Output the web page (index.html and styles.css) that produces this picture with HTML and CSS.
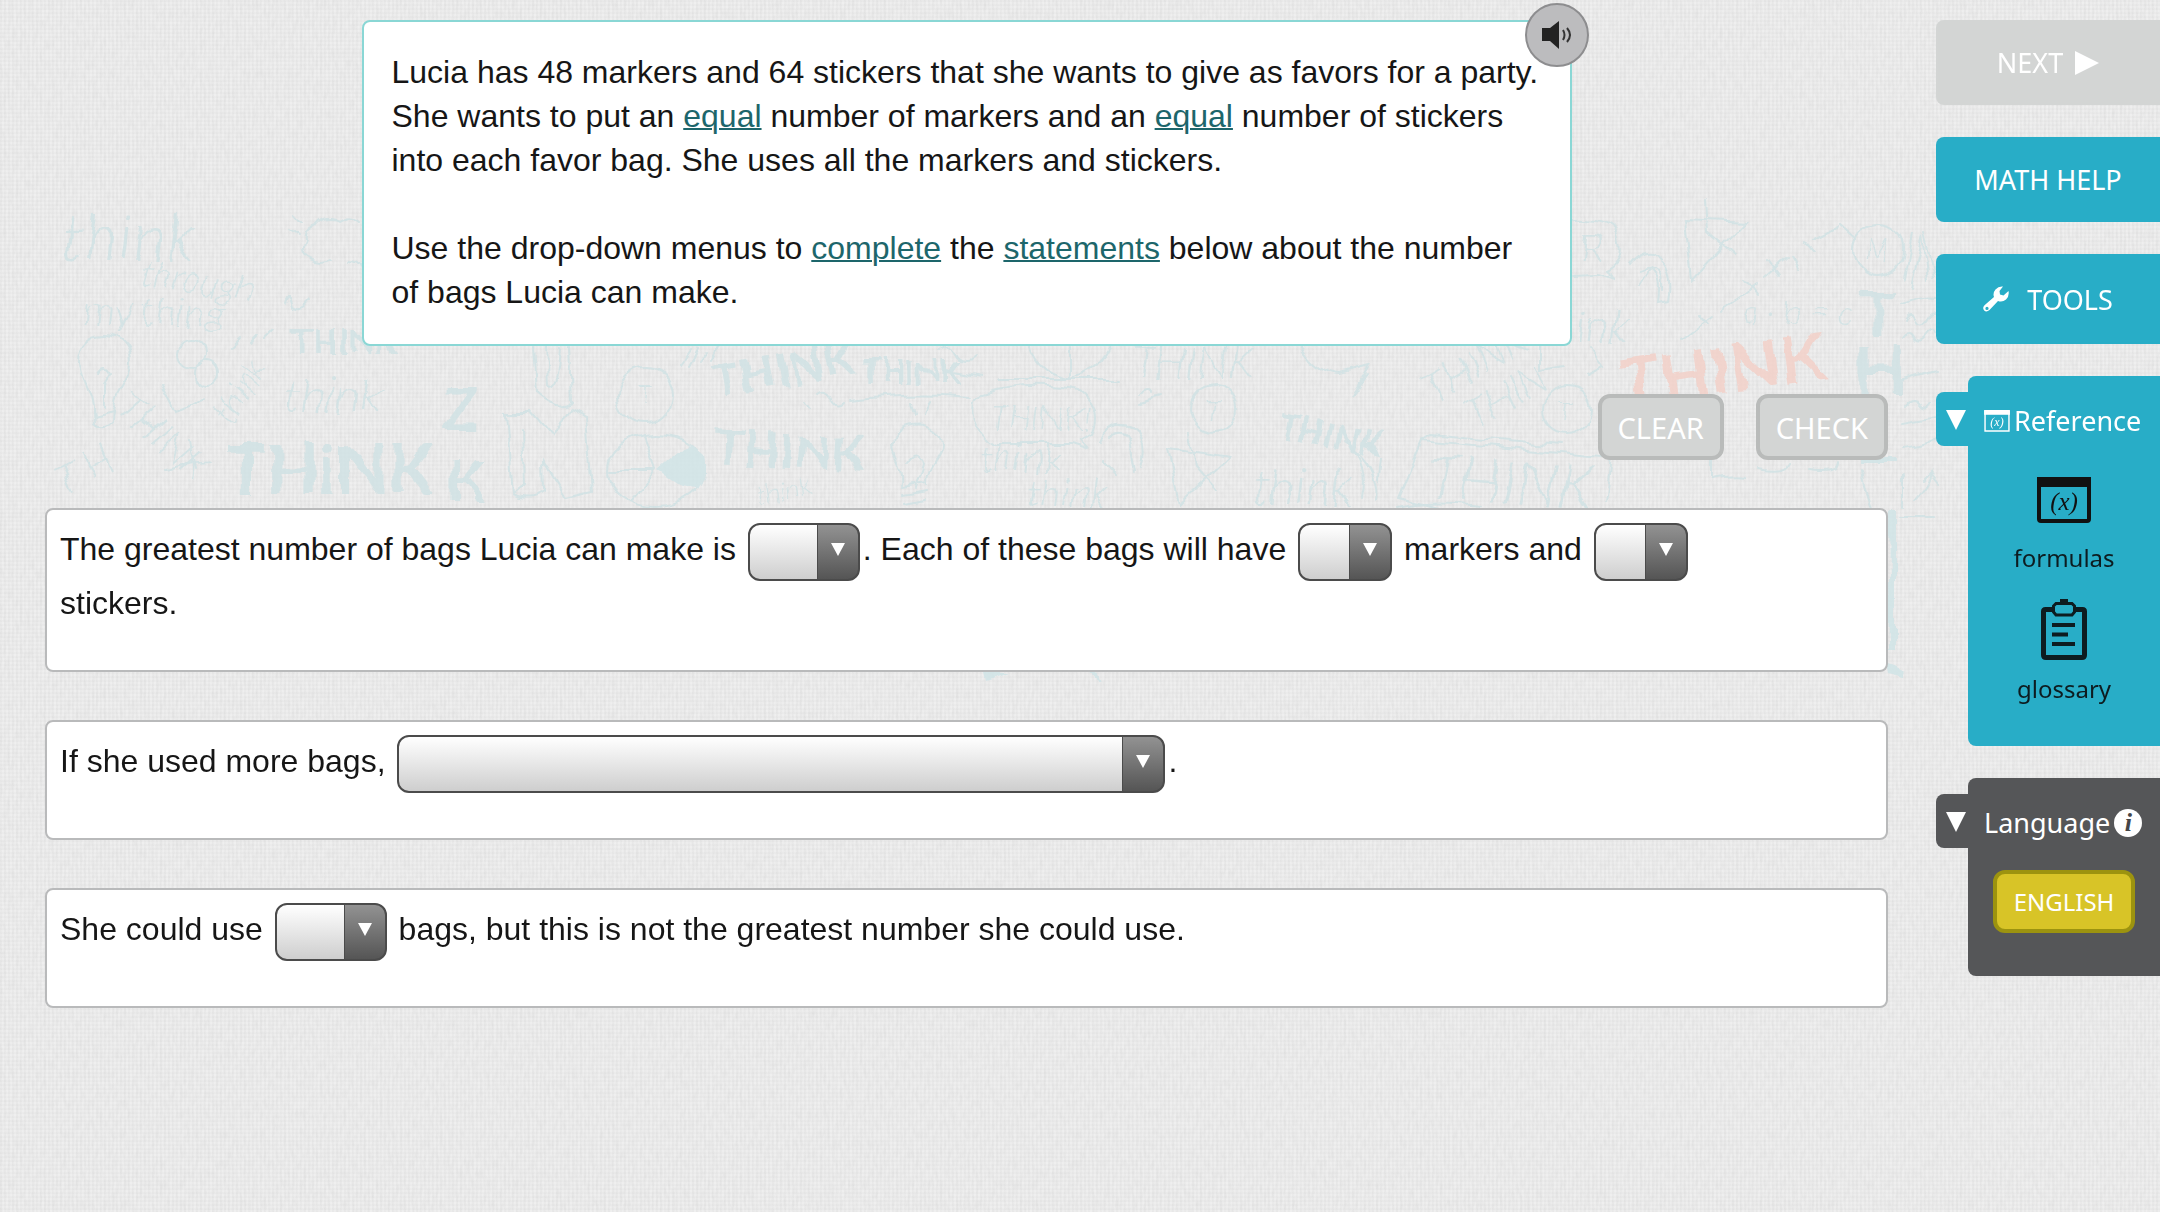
FILE: index.html
```html
<!DOCTYPE html>
<html lang="en">

<head>
    <meta charset="UTF-8">
    <meta name="viewport" content="width=device-width, initial-scale=1.0">
    <title>Math Activity</title>
    <link rel="stylesheet" href="styles.css">
</head>

<body>
    <!-- Doodle background -->
    <svg class="backdrop" viewBox="0 0 2160 1212" preserveAspectRatio="xMidYMin slice" aria-hidden="true">
        <defs>
            <filter id="linen" x="0" y="0" width="100%" height="100%">
                <feTurbulence type="fractalNoise" baseFrequency="0.3 0.1" numOctaves="3" seed="4" />
                <feColorMatrix values="0 0 0 0 0.45  0 0 0 0 0.45  0 0 0 0 0.45  0.9 0 0 0 -0.32" />
            </filter>
            <!-- wobbles the doodles so they look sketched -->
            <filter id="sketch" x="0" y="0" width="100%" height="100%">
                <feTurbulence type="fractalNoise" baseFrequency="0.04" numOctaves="2" seed="7" />
                <feDisplacementMap in="SourceGraphic" scale="12" xChannelSelector="R" yChannelSelector="G" />
            </filter>
        </defs>
        <rect width="2160" height="1212" filter="url(#linen)" opacity="0.25" />
        <g class="doodles" filter="url(#sketch)">
            <g class="doodle-text">
                <text class="script" x="62" y="260" font-size="66">think</text>
                <text class="script" x="140" y="284" font-size="36" transform="rotate(9 140 284)">through</text>
                <text class="script" x="84" y="326" font-size="40">my thing</text>
                <text class="bold" x="292" y="354" font-size="34">THINK</text>
                <text class="script" x="232" y="426" font-size="34" transform="rotate(-58 232 426)">think</text>
                <text class="script" x="284" y="412" font-size="48">think</text>
                <text class="bold" x="226" y="494" font-size="68">THiNK</text>
                <text class="script" x="112" y="410" font-size="40" transform="rotate(42 112 410)">THINK</text>
                <text class="script" x="66" y="496" font-size="40" transform="rotate(-30 66 496)">T H</text>
                <text class="bold" x="442" y="430" font-size="60">Z</text>
                <text class="bold" x="446" y="500" font-size="56">K</text>
                <text class="bold" x="716" y="398" font-size="46" transform="rotate(-10 716 398)">THINK</text>
                <text class="bold" x="862" y="384" font-size="32">THINK</text>
                <text class="bold" x="714" y="464" font-size="48" transform="rotate(3 714 464)">THINK</text>
                <text class="script" x="990" y="430" font-size="34">THINK!</text>
                <text class="script" x="980" y="472" font-size="40">think</text>
                <text class="script" x="1026" y="507" font-size="40">think</text>
                <text class="script" x="760" y="506" font-size="26" transform="rotate(-14 760 506)">think</text>
                <text class="script" x="1132" y="378" font-size="44">THINK</text>
                <text class="bold" x="1276" y="436" font-size="34" transform="rotate(12 1276 436)">THINK</text>
                <text class="script" x="1252" y="504" font-size="50">think</text>
                <text class="script" x="1434" y="404" font-size="40" transform="rotate(-30 1434 404)">THINK</text>
                <text class="script" x="1476" y="430" font-size="40" transform="rotate(-30 1476 430)">THIN</text>
                <text class="script" x="1426" y="498" font-size="60" transform="rotate(4 1426 498)">THINK</text>
                <text class="script" x="1576" y="342" font-size="46">ink</text>
                <text class="script" x="1742" y="324" font-size="34">a · b = c</text>
                <text class="script" x="1866" y="260" font-size="28">M</text>
                <text class="script" x="1580" y="262" font-size="42">R</text>
                <text class="script" x="1558" y="420" font-size="26">T</text>
                <text class="script" x="1206" y="420" font-size="28">T</text>
                <text class="script" x="638" y="404" font-size="26">T</text>
                <text class="bold" x="1860" y="334" font-size="58">T</text>
                <text class="bold" x="1854" y="396" font-size="68">H</text>
                <text class="bold pink" x="1624" y="408" font-size="66" transform="rotate(-8 1624 408)">THINK</text>
            </g>
            <g class="doodle-line">
                <!-- light bulbs -->
                <path d="M93 415 C95 392 80 380 80 362 C80 326 131 326 131 362 C131 384 112 392 113 415 M93 408 L94 425 Q103 434 112 424 L113 408 M93 417 L113 412 M98 374 Q104 364 110 374 L104 384 V408" />
                <path d="M902 486 C904 462 893 458 893 444 C893 418 942 418 942 444 C942 460 926 466 927 486 M902 488 L927 484 M903 496 L927 492 M905 504 L925 500 M909 462 Q918 450 924 464 L916 490 M914 416 L911 402 M924 416 L930 402" />
                <!-- clouds and bubbles -->
                <path d="M361 222 Q350 213 338 221 Q324 215 316 226 Q302 230 304 242 Q298 254 310 260 Q322 266 332 260 M348 262 Q356 262 360 270 M290 230 L298 236 M296 214 L303 222" />
                <path d="M980 394 Q1030 380 1080 390 Q1104 410 1092 432 L1080 440 L1090 450 L1072 444 H996 Q966 424 974 400 Z M970 398 Q920 392 850 400" />
                <path d="M1572 219 Q1618 216 1620 242 Q1624 264 1606 272 L1616 280 L1598 275 L1572 276" />
                <path d="M1627 266 Q1636 252 1654 254 Q1674 268 1668 300 L1658 302 Q1662 276 1650 268 L1640 284 M1640 270 Q1664 260 1662 290" />
                <path d="M1100 440 Q1110 418 1132 428 Q1148 440 1140 470 M1110 436 Q1126 426 1130 446 L1134 474 M1104 460 L1116 472" />
                <!-- circles -->
                <circle cx="645" cy="395" r="28" />
                <circle cx="1567" cy="410" r="24" />
                <circle cx="1214" cy="409" r="24" />
                <circle cx="1878" cy="250" r="25" />
                <circle cx="192" cy="354" r="14" />
                <circle cx="206" cy="374" r="12" />
                <ellipse cx="656" cy="470" rx="48" ry="36" />
                <path d="M656 470 L610 470 M656 470 L644 435 M656 470 L630 500 M1030 346 Q1040 374 1070 378 Q1096 372 1110 346 M1070 346 V378 M1000 379 H1120" />
                <!-- block letters and frames -->
                <path d="M533 346 L536 392 Q556 410 572 402 L570 346 M546 346 L548 384 Q560 390 562 346 M506 412 L512 494 Q530 502 544 492 L543 460 L566 498 L592 492 L586 416 L570 408 L554 438 L532 412 Z M512 494 L524 484 L522 432" />
                <path d="M1398 498 L1422 440 L1612 458 L1606 500 M1422 440 L1432 434 L1560 446 M1398 498 L1440 508" />
                <path d="M1685 219 L1746 222 L1692 281 Z M1706 202 L1708 232 L1734 254 M1168 448 L1230 457 L1180 505 Z M1188 434 L1194 464 L1218 490" />
                <path d="M1682 340 L1712 318 M1698 314 L1708 326 M1720 310 L1756 286 M1744 280 L1756 296 M1764 278 L1786 258 M1768 262 L1778 276 M1790 256 L1798 270 M1804 242 L1814 254 M1814 240 L1838 228 M1840 226 L1856 240" />
                <path d="M1540 336 V368 L1565 364 M1590 350 L1602 366 L1586 374 M1714 450 V478 Q1730 474 1744 476 M1760 470 Q1786 476 1790 462 M1808 470 Q1836 474 1836 462 M1140 392 Q1152 384 1152 392 M1140 402 L1160 396" />
                <path d="M1300 346 Q1318 374 1340 374 L1370 366 L1352 396 L1368 374 M1344 440 Q1370 460 1362 500 M1350 446 Q1380 470 1376 500 M1380 460 L1378 480" />
                <path d="M1862 470 Q1868 506 1880 520 M1902 474 V506 M1916 500 Q1934 480 1932 472 L1924 480 M1932 472 L1940 482 M1900 516 H1936 M1900 380 L1936 370 M1904 448 Q1922 446 1936 440 M1480 506 Q1430 500 1400 508" />
                <path d="M1904 280 L1912 236 M1910 288 L1922 238 L1928 280 M1924 234 L1934 276 M1902 304 Q1920 296 1936 298 M1906 320 Q1912 310 1916 320 T1928 318 T1938 316 M1904 338 Q1910 330 1914 338 T1926 336 T1936 334 M1906 404 Q1912 396 1918 404 T1930 402 M1902 424 L1936 418" />
                <path d="M680 364 L690 350 M688 366 L698 348 M700 360 L708 350 M712 358 L718 346 M940 352 Q952 344 958 356 Q966 364 976 356 M946 370 L984 376 M806 404 L812 412 M818 396 Q826 390 830 400 T842 402" />
                <path d="M162 384 L176 412 L206 400 M190 440 L196 470 M166 470 L192 464 M230 348 L238 340 M250 344 L258 336 M264 340 L272 332 M284 300 Q288 286 292 304 Q300 312 308 300" />
            </g>
            <g class="doodle-fill">
                <path d="M658 472 L690 444 L704 456 Q708 474 698 490 L676 484 Z" />
                <path d="M1862 458 H1896 V463 H1862 Z M1888 510 L1896 510 L1896 650 L1890 650 Z M1884 664 L1906 672 L1904 678 L1886 674 Z M1086 672 L1100 682 L1096 672 Z M984 672 H1010 L986 680 Z" />
            </g>
        </g>
    </svg>

    <div class="page">
        <main class="activity">
            <section class="prompt">
                <p>Lucia has 48 markers and 64 stickers that she wants to give as favors for a party. She wants to put an <a href="#equal">equal</a> number of markers and an <a href="#equal">equal</a> number of stickers into each favor bag. She uses all the markers and stickers.</p>
                <p>Use the drop-down menus to <a href="#complete">complete</a> the <a href="#statements">statements</a> below about the number of bags Lucia can make.</p>
                <button class="audio-button" type="button" aria-label="Listen">
                    <svg width="32" height="32" viewBox="0 0 32 32">
                        <path d="M1 9 H9 L18 2 V30 L9 22 H1 Z" fill="#222" />
                        <path d="M22 11 Q25 16 22 21 M26 9 Q32 16 26 23" fill="none" stroke="#333" stroke-width="2" />
                    </svg>
                </button>
            </section>

            <div class="actions">
                <button class="action-button" type="button">CLEAR</button>
                <button class="action-button" type="button">CHECK</button>
            </div>

            <form class="statements">
                <div class="statement">
                    The greatest number of bags Lucia can make is
                    <select class="dropdown medium" aria-label="Greatest number of bags"><option></option></select>. Each of these bags will have
                    <select class="dropdown small" aria-label="Markers in each bag"><option></option></select>
                    markers and
                    <select class="dropdown small" aria-label="Stickers in each bag"><option></option></select>
                    stickers.
                </div>
                <div class="statement">
                    If she used more bags,
                    <select class="dropdown large" aria-label="What happens with more bags"><option></option></select>.
                </div>
                <div class="statement">
                    She could use
                    <select class="dropdown medium" aria-label="Other number of bags"><option></option></select>
                    bags, but this is not the greatest number she could use.
                </div>
            </form>
        </main>

        <aside class="sidebar">
            <button class="side-button next" type="button">NEXT
                <svg width="24" height="24" viewBox="0 0 24 24"><path d="M0 0 L24 12 L0 24 Z" fill="#fff" /></svg>
            </button>
            <button class="side-button" type="button">MATH HELP</button>
            <button class="side-button tools" type="button">
                <svg width="26" height="26" viewBox="0 0 26 26">
                    <path fill="#fff" fill-rule="evenodd" d="M20 0.500 L16.500 5 L17 8.500 L20.500 9.500 L25.500 5 Q26.500 10 23 13.500 Q19.500 16.500 15 15 L6.500 24 Q3.500 26.500 1.200 24.500 Q-1 22 1.500 19.300 L11 11 Q9.500 7 12.500 3.500 Q15.500 0 20 0.500 Z M4 20.800 A1.600 1.600 0 1 0 4 24 A1.600 1.600 0 1 0 4 20.800 Z" />
                </svg>
                TOOLS
            </button>

            <section class="side-panel">
                <button class="panel-tab" type="button" aria-label="Collapse reference">
                    <svg width="20" height="20" viewBox="0 0 20 20"><path d="M0 0 H20 L10 20 Z" fill="#fff" /></svg>
                </button>
                <div class="panel-body">
                    <h2 class="panel-title">
                        <svg width="26" height="22" viewBox="0 0 54 46">
                            <path d="M2 3 H52 V44 H2 Z" fill="none" stroke="#fff" stroke-width="3" />
                            <path d="M0 0 H54 V10 H0 Z" fill="#fff" />
                            <text class="icon-x" x="27" y="34" fill="#fff">(x)</text>
                        </svg>
                        Reference
                    </h2>
                    <div class="links">
                        <a class="panel-link" href="#formulas">
                            <svg width="54" height="52" viewBox="0 0 54 52">
                                <path d="M2 2 V42 Q2 44 4 44 H50 Q52 44 52 42 V2" fill="none" stroke="#111" stroke-width="4" />
                                <path d="M0 0 H54 V10 H0 Z" fill="#111" />
                                <text class="icon-x" x="27" y="33" fill="#111">(x)</text>
                            </svg>
                            formulas
                        </a>
                        <a class="panel-link" href="#glossary">
                            <svg width="46" height="61" viewBox="0 0 46 61">
                                <path d="M13 10.500 H4.500 Q2.500 10.500 2.500 12.500 V56 Q2.500 58.500 5 58.500 H41 Q43.500 58.500 43.500 56 V12.500 Q43.500 10.500 41.500 10.500 H33" fill="none" stroke="#0d1c20" stroke-width="5" />
                                <path d="M15 4.500 H31 L33.500 7 V13 L31 16 H15 L12.500 13 V7 Z" fill="none" stroke="#0d1c20" stroke-width="3" />
                                <path d="M19 0 H27 V4 H19 Z" fill="#0d1c20" />
                                <path d="M11 26 H34 M11 35.500 H27 M11 45 H34" stroke="#0d1c20" stroke-width="4" />
                            </svg>
                            glossary
                        </a>
                    </div>
                </div>
            </section>

            <section class="side-panel language">
                <button class="panel-tab" type="button" aria-label="Collapse language">
                    <svg width="20" height="20" viewBox="0 0 20 20"><path d="M0 0 H20 L10 20 Z" fill="#fff" /></svg>
                </button>
                <div class="panel-body">
                    <h2 class="panel-title">
                        Language
                        <span class="info">i</span>
                    </h2>
                    <button class="language-button" type="button">ENGLISH</button>
                </div>
            </section>
        </aside>
    </div>
</body>

</html>
```
FILE: styles.css
```css
* {
    box-sizing: border-box;
}

body {
    margin: 0;
    min-height: 100vh;
    position: relative;
    overflow-x: hidden;
    background-color: #efefef;
    background-image:
        repeating-linear-gradient(to right, rgba(0, 0, 0, 0.02) 0 2px, transparent 2px 4px),
        repeating-linear-gradient(to bottom, rgba(0, 0, 0, 0.015) 0 2px, transparent 2px 4px);
    color: #161616;
    font-family: "Liberation Sans", Arial, sans-serif;
    font-size: 32px;
    line-height: 44px;
}

button {
    font-family: "Noto Sans", "Open Sans", sans-serif;
    font-size: 27px;
    color: #fff;
    border: none;
    padding: 0;
    cursor: pointer;
}

/* Background */
.backdrop {
    position: absolute;
    top: 0;
    left: 0;
    width: 100%;
    height: 100%;
}

.doodles {
    opacity: 0.85;
}

.doodle-text {
    fill: #d0e2e4;
}

.doodle-text .script {
    font-family: Lato, sans-serif;
    font-style: italic;
    font-weight: 300;
}

.doodle-text .bold {
    font-family: Lato, sans-serif;
    font-weight: 700;
}

.doodle-text .pink {
    fill: #f3d0c8;
}

.doodle-line {
    fill: none;
    stroke: #d0e2e4;
    stroke-width: 2;
    stroke-linecap: round;
}

.doodle-fill {
    fill: #d0e4e7;
}

.page {
    position: relative;
    display: flex;
    align-items: flex-start;
}

/* Question */
.activity {
    flex: 1;
    padding: 20px 48px 40px 45px;
}

.prompt {
    position: relative;
    max-width: 1210px;
    margin: 0 auto;
    padding: 28px 26px 30px 28px;
    background-color: #fff;
    border: 2px solid #8ad7d5;
    border-radius: 8px;
}

.prompt p {
    margin: 0;
}

.prompt p + p {
    margin-top: 44px;
}

.prompt a {
    color: #1d666b;
    text-decoration-thickness: 2px;
}

.audio-button {
    position: absolute;
    top: -19px;
    right: -19px;
    width: 64px;
    height: 64px;
    display: flex;
    align-items: center;
    justify-content: center;
    background-color: #bcbcbe;
    border: 2px solid #8d8d8f;
    border-radius: 50%;
}

.actions {
    display: flex;
    justify-content: flex-end;
    gap: 32px;
    margin: 48px 0;
}

.action-button {
    height: 66px;
    padding: 0 16px;
    background-color: #d3d5d4;
    border: 4px solid #b9bbba;
    border-radius: 12px;
    font-size: 29px;
}

/* Statements */
.statements {
    display: flex;
    flex-direction: column;
    gap: 48px;
}

.statement {
    padding: 13px 80px 45px 13px;
    background-color: #fff;
    border: 2px solid #b9babb;
    border-radius: 8px;
}

.dropdown {
    appearance: none;
    height: 58px;
    margin: 0 3px;
    vertical-align: middle;
    border: 2px solid #4b4b4b;
    border-radius: 12px;
    background:
        url("data:image/svg+xml,%3Csvg xmlns='http://www.w3.org/2000/svg' width='14' height='13'%3E%3Cpath d='M0 0H14L7 13Z' fill='white'/%3E%3C/svg%3E") no-repeat right 13px top 18px,
        linear-gradient(#4b4b4b, #4b4b4b) no-repeat right 40px top / 1px 100%,
        linear-gradient(#929292, #555) no-repeat right top / 40px 100%,
        linear-gradient(#fff, #cecece);
    font: inherit;
}

.small {
    width: 94px;
}

.medium {
    width: 112px;
}

.large {
    width: 768px;
}

/* Sidebar */
.sidebar {
    width: 224px;
    flex: none;
    display: flex;
    flex-direction: column;
    gap: 32px;
    padding: 20px 0 32px;
    font-family: "Noto Sans", "Open Sans", sans-serif;
}

.side-button {
    height: 85px;
    display: flex;
    align-items: center;
    justify-content: center;
    gap: 12px;
    background-color: #28adc7;
    border-radius: 8px 0 0 8px;
}

.side-button.next {
    background-color: #d3d5d4;
}

.side-button.tools {
    height: 90px;
    gap: 18px;
}

.side-panel {
    display: flex;
    align-items: flex-start;
}

.panel-tab {
    width: 32px;
    height: 54px;
    margin-top: 16px;
    padding: 0 2px 0 10px;
    background-color: #28adc7;
    border-radius: 8px 0 0 8px;
}

.panel-body {
    flex: 1;
    padding: 26px 0 41px;
    background-color: #28adc7;
    border-radius: 8px 0 0 8px;
}

.panel-title {
    display: flex;
    align-items: center;
    gap: 4px;
    margin: 0;
    padding-left: 16px;
    color: #fff;
    font-size: 27px;
    font-weight: 400;
    line-height: 38px;
}

.icon-x {
    font-family: "Liberation Serif", serif;
    font-style: italic;
    font-size: 25px;
    text-anchor: middle;
}

.links {
    display: flex;
    flex-direction: column;
    align-items: center;
    gap: 25px;
    margin-top: 37px;
}

.panel-link {
    display: flex;
    flex-direction: column;
    align-items: center;
    gap: 13px;
    color: #0d1c20;
    font-size: 24px;
    line-height: 32px;
    text-decoration: none;
}

.language .panel-tab,
.language .panel-body {
    background-color: #555658;
}

.language .panel-body {
    padding-bottom: 43px;
}

.info {
    width: 28px;
    height: 28px;
    border-radius: 50%;
    background-color: #fff;
    color: #444547;
    font-family: "Liberation Serif", serif;
    font-size: 26px;
    font-style: italic;
    font-weight: 700;
    line-height: 28px;
    text-align: center;
}

.language-button {
    display: block;
    width: 142px;
    height: 63px;
    margin: 28px auto 0;
    background-color: #d8c427;
    border: 4px solid #9c930f;
    border-radius: 12px;
    font-size: 24px;
}
```
